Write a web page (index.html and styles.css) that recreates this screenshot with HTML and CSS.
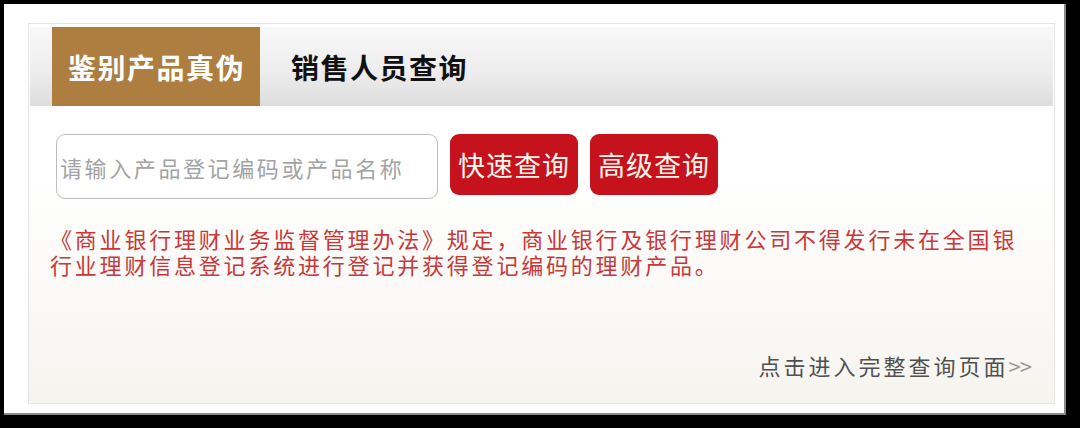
FILE: index.html
```html
<!DOCTYPE html>
<html lang="zh-CN">
<head>
    <meta charset="UTF-8">
    <meta name="viewport" content="width=device-width, initial-scale=1.0">
    <title>理财产品查询</title>
    <link rel="stylesheet" href="styles.css">
</head>
<body>
    <div class="frame">
        <div class="panel">
            <div class="tabs">
                <div class="tab tab-active">鉴别产品真伪</div>
                <div class="tab">销售人员查询</div>
            </div>
            <div class="content">
                <div class="search-row">
                    <input type="text" class="search-input" placeholder="请输入产品登记编码或产品名称">
                    <button class="btn">快速查询</button>
                    <button class="btn">高级查询</button>
                </div>
                <p class="notice">《商业银行理财业务监督管理办法》规定，商业银行及银行理财公司不得发行未在全国银<br>行业理财信息登记系统进行登记并获得登记编码的理财产品。</p>
                <a class="more-link" href="#">点击进入完整查询页面<span class="arrows">&gt;&gt;</span></a>
            </div>
        </div>
    </div>
</body>
</html>
```

FILE: styles.css
```css
body {
    margin: 0;
    background-color: #000000;
    font-family: "Noto Sans CJK SC", "Noto Sans", sans-serif;
}
.frame {
    margin: 4px 0 0 4px;
    width: 1062px;
    height: 411px;
    box-sizing: border-box;
    background-color: #ffffff;
    border-right: 2px solid #8a8a8a;
    border-bottom: 2px solid #8a8a8a;
    padding: 19px 0 0 24px;
}
.panel {
    width: 1027px;
    height: 381px;
    box-sizing: border-box;
    border: 1px solid #e4e4e4;
    padding: 3px 1px 0 1px;
    background: linear-gradient(to bottom, #ffffff 40%, #f6f4ef 100%);
    display: flex;
    flex-direction: column;
}
.tabs {
    height: 79px;
    display: flex;
    padding-left: 22px;
    background: linear-gradient(to bottom, #f8f8f8 0%, #ececec 60%, #dddddd 100%);
}
.tab {
    height: 79px;
    padding: 0 15px 0 16px;
    display: flex;
    align-items: center;
    font-size: 28px;
    font-weight: 700;
    letter-spacing: 1.5px;
    color: #111111;
    margin-right: 15px;
}
.tab-active {
    background-color: #ad7e40;
    color: #ffffff;
}
.content {
    flex: 1;
    display: flex;
    flex-direction: column;
    padding: 28px 22px 22px 26px;
}
.search-row {
    display: flex;
    align-items: flex-start;
    gap: 12px;
}
.search-input {
    width: 382px;
    height: 65px;
    box-sizing: border-box;
    border: 1px solid #bdbdbd;
    border-radius: 9px;
    padding: 0 0 0 3px;
    font-family: inherit;
    font-size: 22px;
    letter-spacing: 2.6px;
    outline: none;
    background-color: #ffffff;
}
.search-input::placeholder {
    color: #a3a3a3;
}
.btn {
    height: 61px;
    padding: 0 8px;
    border: none;
    border-radius: 9px;
    background-color: #c5121d;
    color: #fff6ee;
    font-family: inherit;
    font-size: 27px;
    letter-spacing: 1px;
    cursor: pointer;
}
.notice {
    margin: 26px 0 0 -6px;
    font-size: 22px;
    line-height: 26px;
    letter-spacing: 2.8px;
    color: #c93838;
}
.more-link {
    margin-top: auto;
    align-self: flex-end;
    font-size: 22px;
    letter-spacing: 3px;
    color: #505050;
    text-decoration: none;
}
.arrows {
    color: #9a9a9a;
    letter-spacing: -1px;
}
```
